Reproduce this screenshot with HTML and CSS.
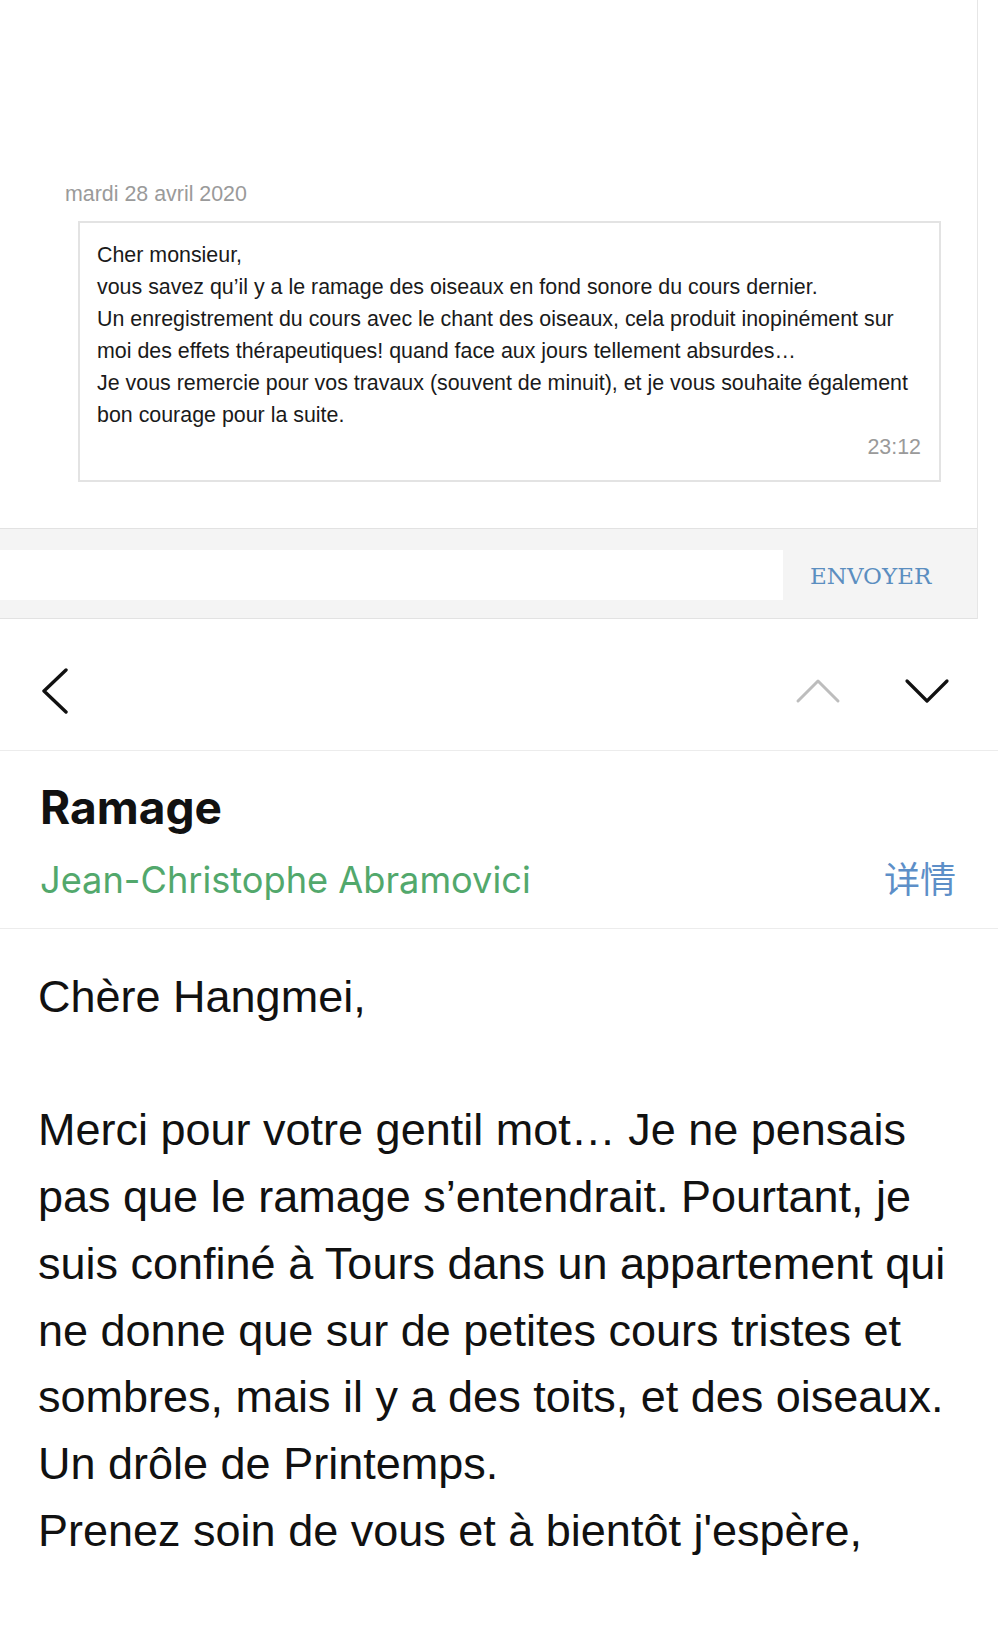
FILE: index.html
```html
<!DOCTYPE html>
<html lang="fr">
<head>
<meta charset="utf-8">
<title>Ramage</title>
<link rel="stylesheet" href="styles.css">
</head>
<body>
<section class="chat-panel">
  <div class="messages">
    <div class="date">mardi 28 avril 2020</div>
    <div class="bubble">
      <p class="bubble-text">Cher monsieur,<br>vous savez qu’il y a le ramage des oiseaux en fond sonore du cours dernier.<br>Un enregistrement du cours avec le chant des oiseaux, cela produit inopinément sur<br>moi des effets thérapeutiques! quand face aux jours tellement absurdes…<br>Je vous remercie pour vos travaux (souvent de minuit), et je vous souhaite également<br>bon courage pour la suite.</p>
      <div class="time">23:12</div>
    </div>
  </div>
  <div class="composer">
    <div class="input"></div>
    <button class="send">ENVOYER</button>
  </div>
</section>

<nav class="nav">
  <svg class="back" width="28" height="46" viewBox="0 0 28 46"><polyline points="25,2 3,23 25,44" fill="none" stroke="#111" stroke-width="3.4" stroke-linecap="round" stroke-linejoin="round"/></svg>
  <div class="arrows">
    <svg width="46" height="26" viewBox="0 0 46 26"><polyline points="3,23 23,3 43,23" fill="none" stroke="#bdbdbd" stroke-width="3" stroke-linecap="round" stroke-linejoin="round"/></svg>
    <svg width="46" height="26" viewBox="0 0 46 26"><polyline points="3,3 23,23 43,3" fill="none" stroke="#111" stroke-width="3.2" stroke-linecap="round" stroke-linejoin="round"/></svg>
  </div>
</nav>

<header class="header">
  <h1 class="title">Ramage</h1>
  <div class="from-row">
    <span class="from">Jean-Christophe Abramovici</span>
    <span class="details">详情</span>
  </div>
</header>

<article class="mail-body">
  <p>Chère Hangmei,<br><br>Merci pour votre gentil mot… Je ne pensais<br>pas que le ramage s’entendrait. Pourtant, je<br>suis confiné à Tours dans un appartement qui<br>ne donne que sur de petites cours tristes et<br>sombres, mais il y a des toits, et des oiseaux.<br>Un drôle de Printemps.<br>Prenez soin de vous et à bientôt j'espère,</p>
</article>
</body>
</html>
```

FILE: styles.css
```css
html, body {
  margin: 0;
  padding: 0;
  background: #fff;
}

body {
  width: 998px;
  font-family: "Liberation Sans", Arial, sans-serif;
  color: #111;
}

.chat-panel {
  width: 978px;
  border-right: 1px solid #e6e6e6;
  box-sizing: border-box;
}

.messages {
  height: 528px;
  box-sizing: border-box;
  padding-top: 182px;
}

.date {
  margin-left: 65px;
  font-size: 21.4px;
  line-height: 24px;
  color: #9a9a9a;
}

.bubble {
  margin: 15px 0 0 78px;
  width: 863px;
  box-sizing: border-box;
  border: 2px solid #e3e3e3;
  padding: 16px 18px 22px 17px;
}

.bubble-text {
  margin: 0;
  font-size: 21.4px;
  line-height: 32px;
  color: #1a1a1a;
  white-space: nowrap;
}

.time {
  margin-top: 5px;
  text-align: right;
  font-size: 21.4px;
  line-height: 22px;
  color: #9a9a9a;
}

.composer {
  height: 91px;
  box-sizing: border-box;
  border-top: 1px solid #e2e2e2;
  border-bottom: 1px solid #e2e2e2;
  background: #f4f4f4;
  display: flex;
  align-items: center;
}

.input {
  width: 783px;
  height: 50px;
  background: #fff;
  margin-top: 2px;
}

.send {
  margin-left: 27px;
  margin-top: 4px;
  padding: 0;
  border: 0;
  background: none;
  font-family: "DejaVu Serif", serif;
  font-size: 23px;
  color: #5b8ec0;
  letter-spacing: 0;
}

.nav {
  height: 132px;
  box-sizing: border-box;
  border-bottom: 1px solid #ececec;
  display: flex;
  align-items: center;
  justify-content: space-between;
  padding: 12px 48px 0 41px;
}

.back {
  display: block;
}

.arrows {
  display: flex;
  gap: 63px;
}

.arrows svg {
  display: block;
}

.header {
  padding: 30px 42px 0 40px;
  height: 178px;
  box-sizing: border-box;
  border-bottom: 1px solid #ececec;
}

.title {
  margin: 0;
  font-family: Inter, "Liberation Sans", sans-serif;
  font-weight: 700;
  font-size: 46px;
  line-height: 52px;
  color: #111;
}

.from-row {
  margin-top: 22px;
  display: flex;
  justify-content: space-between;
  align-items: baseline;
}

.from {
  font-family: Inter, "Liberation Sans", sans-serif;
  font-size: 36.2px;
  line-height: 44px;
  color: #52a86c;
}

.details {
  font-family: "Noto Sans CJK SC", sans-serif;
  font-size: 36px;
  line-height: 44px;
  color: #5d8fc8;
}

.mail-body {
  padding: 35px 38px 0 38px;
}

.mail-body p {
  margin: 0;
  font-size: 45px;
  line-height: 66.7px;
  color: #111;
  white-space: nowrap;
}
```
